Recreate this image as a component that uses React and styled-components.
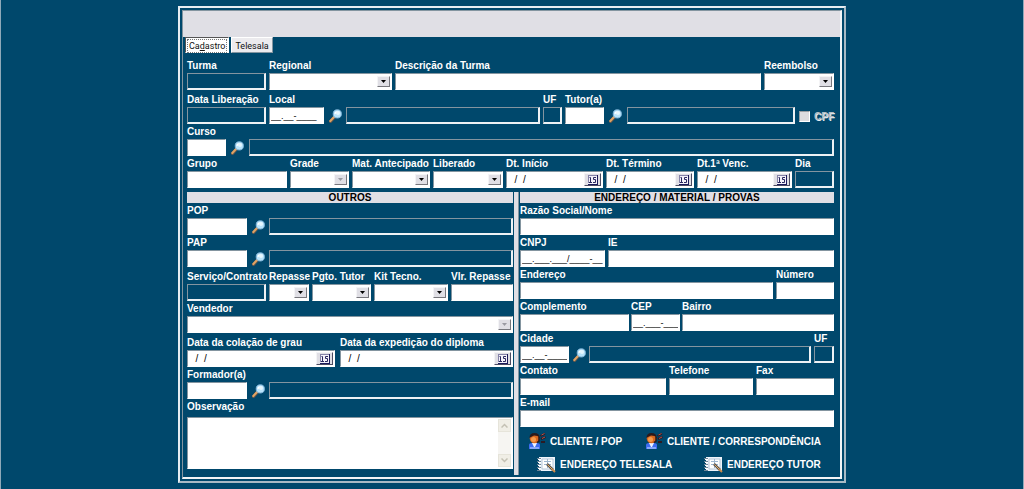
import React, { useId } from "react";
import styled, { createGlobalStyle } from "styled-components";

const navy = "#00486c";
const silver = "#e0dfe5";
const shade = "#8495a0";

export default function App() {
  return (
    <Page>
      <GlobalStyle />
      <Frame>
        <Panel>
          <TitleBar />
          <Tabs role="tablist">
            <Tab type="button" role="tab" aria-selected="true">
              <span>
                Ca<u>d</u>astro
              </span>
            </Tab>
            <Tab type="button" role="tab" aria-selected="false">
              <span>Telesala</span>
            </Tab>
          </Tabs>
          <Form onSubmit={(e) => e.preventDefault()}>
            <Row $cols={[79, 123, 366, 70]}>
              <Display label="Turma" />
              <Combo label="Regional" />
              <Text label="Descrição da Turma" />
              <Combo label="Reembolso" />
            </Row>
            <Row $loose $cols={[79, 55, 16, 194, 19, 39, 17, 168, 36]}>
              <Display label="Data Liberação" />
              <Text label="Local" mask="__.__-____" />
              <Search name="local" />
              <Display name="Nome do local" />
              <Display label="UF" />
              <Text label="Tutor(a)" />
              <Search name="tutor" />
              <Display name="Nome do tutor" />
              <CheckLabel>
                <input type="checkbox" disabled />
                CPF
              </CheckLabel>
            </Row>
            <Row $cols={[39, 17, 585]}>
              <Text label="Curso" />
              <Search name="curso" />
              <Display name="Nome do curso" />
            </Row>
            <Row $cols={[100, 59, 78, 70, 97, 88, 95, 39]}>
              <Text label="Grupo" />
              <Combo label="Grade" disabled />
              <Combo label="Mat. Antecipado" />
              <Combo label="Liberado" />
              <DateField label="Dt. Início" />
              <DateField label="Dt. Término" />
              <DateField label="Dt.1ª Venc." />
              <Display label="Dia" />
            </Row>
            <Columns>
              <Section>
                <SectionTitle>OUTROS</SectionTitle>
                <Row $cols={[60, 16, 244]}>
                  <Text label="POP" />
                  <Search name="POP" />
                  <Display name="Nome do POP" />
                </Row>
                <Row $cols={[60, 16, 244]}>
                  <Text label="PAP" />
                  <Search name="PAP" />
                  <Display name="Nome do PAP" />
                </Row>
                <Row $loose $cols={[79, 40, 59, 74, 62]}>
                  <Display label="Serviço/Contrato" />
                  <Combo label="Repasse" />
                  <Combo label="Pgto. Tutor" />
                  <Combo label="Kit Tecno." />
                  <Text label="Vlr. Repasse" />
                </Row>
                <Row $cols={[1]}>
                  <Combo label="Vendedor" disabled />
                </Row>
                <Row $loose $gap={5} $cols={[148, 173]}>
                  <DateField label="Data da colação de grau" />
                  <DateField label="Data da expedição do diploma" />
                </Row>
                <Row $cols={[60, 16, 244]}>
                  <Text label="Formador(a)" />
                  <Search name="formador" />
                  <Display name="Nome do formador" />
                </Row>
                <Row $cols={[1]}>
                  <Notes label="Observação" />
                </Row>
              </Section>
              <Divider />
              <Section>
                <SectionTitle>ENDEREÇO / MATERIAL / PROVAS</SectionTitle>
                <Row $cols={[1]}>
                  <Text label="Razão Social/Nome" />
                </Row>
                <Row $cols={[85, 226]}>
                  <Text label="CNPJ" mask="__.___.___/____-__" />
                  <Text label="IE" />
                </Row>
                <Row $cols={[253, 58]}>
                  <Text label="Endereço" />
                  <Text label="Número" />
                </Row>
                <Row $gap={2} $cols={[109, 49, 152]}>
                  <Text label="Complemento" />
                  <Text label="CEP" mask="__.___-___" />
                  <Text label="Bairro" />
                </Row>
                <Row $cols={[49, 14, 222, 20]}>
                  <Text label="Cidade" mask="__.__-____" />
                  <Search name="cidade" />
                  <Display name="Nome da cidade" />
                  <Display label="UF" />
                </Row>
                <Row $cols={[146, 84, 78]}>
                  <Text label="Contato" />
                  <Text label="Telefone" />
                  <Text label="Fax" />
                </Row>
                <Row $cols={[1]}>
                  <Text label="E-mail" />
                </Row>
                <Actions $indent={8} $cols={[117, 189]}>
                  <Action type="button">
                    <PersonIcon />
                    CLIENTE / POP
                  </Action>
                  <Action type="button">
                    <PersonIcon />
                    CLIENTE / CORRESPONDÊNCIA
                  </Action>
                </Actions>
                <Actions $indent={17} $cols={[167, 130]}>
                  <Action type="button">
                    <NoteIcon />
                    ENDEREÇO TELESALA
                  </Action>
                  <Action type="button">
                    <NoteIcon />
                    ENDEREÇO TUTOR
                  </Action>
                </Actions>
              </Section>
            </Columns>
          </Form>
        </Panel>
      </Frame>
    </Page>
  );
}

function Text({ label, mask }) {
  const id = useId();
  return (
    <Field>
      <label htmlFor={id}>{label}</label>
      <Input id={id} defaultValue={mask} $mask={Boolean(mask)} />
    </Field>
  );
}

function Display({ label, name }) {
  const id = useId();
  return (
    <Field>
      {label && <label htmlFor={id}>{label}</label>}
      <ReadOnly id={id} readOnly aria-label={name} />
    </Field>
  );
}

function Combo({ label, disabled }) {
  const id = useId();
  return (
    <Field>
      <label htmlFor={id}>{label}</label>
      <SelectBox>
        <select id={id} disabled={disabled}>
          <option></option>
        </select>
        <Arrow $off={disabled}>
          <svg width="5" height="3" viewBox="0 0 5 3">
            <path d="M0 0h5L2.500 3z" fill="currentColor" />
          </svg>
        </Arrow>
      </SelectBox>
    </Field>
  );
}

function DateField({ label }) {
  const id = useId();
  return (
    <Field>
      <label htmlFor={id}>{label}</label>
      <DateBox>
        <input id={id} defaultValue="  /  /" />
        <button type="button" aria-label={`Calendário: ${label}`}>
          <svg width="10" height="10" viewBox="0 0 10 10">
            <path d="M0 0h9v9H0z" fill="#f4f2fa" />
            <path d="M0 .5h9M.5 0v8" stroke="#8583a8" />
            <path d="M9.500 0v10M0 9.500h10" stroke="#1c1a5c" />
            <path d="M1.500 2.500h1v5M1 7.500h3M8 2.500H5.500v2H7.500v3H5" fill="none" stroke="#2a2860" />
          </svg>
        </button>
      </DateBox>
    </Field>
  );
}

function Notes({ label }) {
  const id = useId();
  return (
    <Field $space={4}>
      <label htmlFor={id}>{label}</label>
      <NotesBox>
        <textarea id={id} />
        <Scroll>
          <button type="button" disabled aria-label="Rolar para cima">
            <svg width="7" height="5" viewBox="0 0 7 5">
              <path d="M0.500 4.500l3-3 3 3" fill="none" stroke="#c4c1b4" strokeWidth="1.500" />
            </svg>
          </button>
          <button type="button" disabled aria-label="Rolar para baixo">
            <svg width="7" height="5" viewBox="0 0 7 5">
              <path d="M0.500 .5l3 3 3-3" fill="none" stroke="#c4c1b4" strokeWidth="1.500" />
            </svg>
          </button>
        </Scroll>
      </NotesBox>
    </Field>
  );
}

function Search({ name }) {
  return (
    <SearchButton type="button" aria-label={`Pesquisar ${name}`}>
      <svg width="13" height="14" viewBox="0 0 13 14">
        <path d="M1.500 12.500l4-4.500" stroke="#6b5a4c" strokeWidth="3" strokeLinecap="round" />
        <path d="M1.300 12l3.700-4" stroke="#e0a364" strokeWidth="2" strokeLinecap="round" />
        <circle cx="8.300" cy="4.900" r="4.100" fill="#b9e4fb" stroke="#7fb4d8" />
        <path d="M5.500 5.500a3 3 0 0 1 3-3.300 4 4 0 0 1-3 3.300z" fill="#fff" />
        <circle cx="9" cy="4" r="2" fill="#e6f7ff" />
      </svg>
    </SearchButton>
  );
}

function PersonIcon() {
  return (
    <svg width="18" height="18" viewBox="0 0 18 18">
      <path d="M1 17v-4q0-2 3-2h5q3 0 3 2v4z" fill="#3d6cf0" />
      <path d="M4 11l2.500 5L9 11z" fill="#eef3ff" />
      <path d="M2 15h9v2H2z" fill="#86a6fa" />
      <circle cx="6.500" cy="6.500" r="4.800" fill="#d9681f" />
      <circle cx="5.500" cy="7.500" r="2.500" fill="#f39a4c" />
      <path d="M1.500 6Q1.500 1 6.500 1q5 0 5.200 5L9.500 4 6 3.500 3 5z" fill="#2a1a1c" />
      <path d="M11 5v4l-2 1.500" fill="none" stroke="#2a1a1c" strokeWidth="1.500" />
      <path d="M12.500 4l4.500-2.500M13 7l4.500-2M13 10h4" stroke="#2c1a22" strokeWidth="2" />
      <path d="M13.500 3l3-1.500M14 6.500l3-1.500" stroke="#b5534a" />
    </svg>
  );
}

function NoteIcon() {
  return (
    <svg width="19" height="17" viewBox="0 0 19 17">
      <path d="M2 1h16v14H2z" fill="#eef4fb" />
      <path d="M5 3h11v10H5z" fill="#fff" stroke="#b5c6d8" />
      <path d="M7 5.500h7M7 8.500h7M10.500 3v9" stroke="#9db6d0" />
      <path d="M0 2.500h4M0 5.500h4M0 8.500h4M0 11.500h4M0 14.500h4" stroke="#6f8698" />
      <path d="M1 3.500h3M1 6.500h3M1 9.500h3M1 12.500h3" stroke="#fff" />
      <path d="M10 8l6 6" stroke="#5b5450" strokeWidth="2.500" />
      <path d="M10.500 8.500l5.500 5.500" stroke="#e3b06a" />
      <path d="M15 13l3 3" stroke="#c98a4a" strokeWidth="2" />
    </svg>
  );
}

const columns = (list) => list.map((n) => `minmax(0, ${n}fr)`).join(" ");

const GlobalStyle = createGlobalStyle`
  * {
    box-sizing: border-box;
  }
  body {
    margin: 0;
    background: ${navy};
  }
  body, button, input, select, textarea {
    font-family: "Liberation Sans", Arial, sans-serif;
    font-size: 10px;
  }
  button, input, select, textarea {
    margin: 0;
    padding: 0;
    border: 0;
    border-radius: 0;
    outline: 0;
  }
  svg {
    display: block;
    flex: none;
  }
`;

const Page = styled.main`
  min-height: 100vh;
  padding: 6px 12px;
  background: ${navy};
  border-left: 1px solid #8fa9b9;
  border-right: 1px solid #8fa9b9;
`;

const Frame = styled.div`
  max-width: 668px;
  margin: 0 auto;
  padding: 2px;
  border: 2px solid;
  border-color: #e6edf2 #a9bac5 #a9bac5 #e6edf2;
`;

const Panel = styled.div`
  border: 1px solid ${shade};
  border-right: 2px solid #f2f5f7;
  border-bottom: 2px solid #f2f5f7;
`;

const TitleBar = styled.header`
  height: 26px;
  background: ${silver};
`;

const Tabs = styled.div`
  display: flex;
  align-items: flex-start;
  gap: 2px;
  padding-left: 2px;
`;

const Tab = styled.button`
  height: 16px;
  padding: 1px;
  font-family: Roboto, "Liberation Sans", sans-serif;
  font-size: 9px;
  color: #111;
  background: #ecebee;
  border: 1px solid;
  border-color: #fff ${shade} ${shade} #fff;
  span {
    display: block;
    padding: 0 1px;
    line-height: 12px;
    border: 1px solid transparent;
  }
  &[aria-selected="true"] {
    background: #fff;
    border-color: #555 #fff #fff #555;
    span {
      border: 1px dotted #777;
    }
  }
`;

const Form = styled.form`
  padding: 5px 6px 2px 4px;
`;

const Row = styled.div`
  display: grid;
  grid-template-columns: ${({ $cols }) => columns($cols)};
  gap: ${({ $gap = 3 }) => $gap}px;
  align-items: end;
  margin-top: ${({ $loose }) => ($loose ? 4 : 2)}px;
`;

const Field = styled.div`
  display: flex;
  flex-direction: column;
  gap: ${({ $space = 1 }) => $space}px;
  min-width: 0;
  label {
    font-weight: 700;
    line-height: 12px;
    color: #fff;
    white-space: nowrap;
  }
`;

const Input = styled.input`
  width: 100%;
  height: 17px;
  padding: 0 1px;
  background: #fff;
  border: 1px solid #fff;
  border-top-color: ${shade};
  border-left-color: ${shade};
  font-size: ${({ $mask }) => ($mask ? 9 : 10)}px;
`;

const ReadOnly = styled.input`
  width: 100%;
  height: 17px;
  background: transparent;
  border: 1px solid ${shade};
  border-right: 2px solid #eef2f5;
  border-bottom: 2px solid #eef2f5;
  color: #fff;
`;

const SelectBox = styled.div`
  display: grid;
  height: 17px;
  padding: 2px 1px;
  background: #fff;
  border: 1px solid #fff;
  border-top-color: ${shade};
  border-left-color: ${shade};
  select {
    grid-area: 1 / 1;
    width: 100%;
    appearance: none;
    background: #fff;
    opacity: 1;
  }
`;

const Arrow = styled.span`
  grid-area: 1 / 1;
  justify-self: end;
  display: flex;
  align-items: center;
  justify-content: center;
  width: 13px;
  color: ${({ $off }) => ($off ? "#9a9aa2" : "#000")};
  background: ${silver};
  border: 1px solid;
  border-color: #f4f4f6 #77777d #77777d #f4f4f6;
  pointer-events: none;
`;

const DateBox = styled.div`
  display: flex;
  height: 17px;
  padding: 1px;
  background: #fff;
  border: 1px solid #fff;
  border-top-color: ${shade};
  border-left-color: ${shade};
  input {
    flex: 1;
    min-width: 0;
    padding: 0 1px;
  }
  button {
    display: flex;
    align-items: center;
    justify-content: center;
    width: 17px;
    background: ${silver};
    border: 1px solid;
    border-color: #f4f4f6 #4c4c62 #4c4c62 #f4f4f6;
  }
`;

const SearchButton = styled.button`
  display: flex;
  align-items: center;
  justify-content: center;
  height: 17px;
  background: transparent;
`;

const CheckLabel = styled.label`
  display: flex;
  align-items: center;
  gap: 4px;
  height: 17px;
  padding: 2px 0 0 1px;
  font-weight: 700;
  color: #b4bec5;
  text-shadow: 1px 1px 0 #e9eef1;
  input {
    flex: none;
    width: 11px;
    height: 11px;
    appearance: none;
    background: #dcdcdf;
    border: 1px solid;
    border-color: #9a9ea2 #fff #fff #9a9ea2;
  }
`;

const Columns = styled.div`
  display: grid;
  grid-template-columns: minmax(0, 326fr) 5px minmax(0, 314fr);
  column-gap: 1px;
  margin-top: 4px;
`;

const Section = styled.section`
  padding-bottom: 2px;
`;

const SectionTitle = styled.h2`
  margin: 0;
  font-size: 10px;
  line-height: 11px;
  text-align: center;
  color: #000;
  background: ${silver};
`;

const Divider = styled.div`
  background: ${silver};
  border-right: 1px solid ${shade};
`;

const NotesBox = styled.div`
  display: flex;
  height: 52px;
  padding: 1px;
  background: #fff;
  border: 1px solid #fff;
  border-top-color: ${shade};
  border-left-color: ${shade};
  textarea {
    flex: 1;
    min-width: 0;
    resize: none;
    scrollbar-width: none;
  }
`;

const Scroll = styled.div`
  display: flex;
  flex-direction: column;
  justify-content: space-between;
  width: 13px;
  background: #f6f5f2;
  button {
    display: flex;
    align-items: center;
    justify-content: center;
    height: 13px;
    background: #f0eee6;
    border: 1px solid #e6e4da;
  }
`;

const Actions = styled.div`
  display: grid;
  grid-template-columns: ${({ $cols }) => columns($cols)};
  padding-left: ${({ $indent }) => $indent}px;
  margin-top: 5px;
`;

const Action = styled.button`
  display: flex;
  align-items: center;
  gap: 4px;
  height: 18px;
  font-weight: 700;
  color: #fff;
  background: transparent;
  white-space: nowrap;
`;
